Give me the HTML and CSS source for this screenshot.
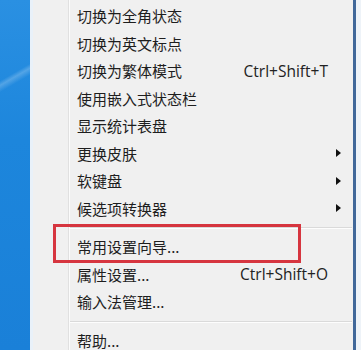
FILE: index.html
```html
<!DOCTYPE html>
<html lang="zh-CN">
<head>
<meta charset="utf-8">
<title>输入法菜单</title>
<link rel="stylesheet" href="styles.css">
</head>
<body>
<div class="screen">
  <div class="desk"></div>
  <div class="menu">
    <div class="item"><span class="label">切换为全角状态</span></div>
    <div class="item"><span class="label">切换为英文标点</span></div>
    <div class="item"><span class="label">切换为繁体模式</span><span class="key">Ctrl+Shift+T</span></div>
    <div class="item"><span class="label">使用嵌入式状态栏</span></div>
    <div class="item"><span class="label">显示统计表盘</span></div>
    <div class="item"><span class="label">更换皮肤</span><span class="arrow"></span></div>
    <div class="item"><span class="label">软键盘</span><span class="arrow"></span></div>
    <div class="item"><span class="label">候选项转换器</span><span class="arrow"></span></div>
    <div class="sep"></div>
    <div class="item"><span class="label">常用设置向导...</span></div>
    <div class="item"><span class="label">属性设置...</span><span class="key">Ctrl+Shift+O</span></div>
    <div class="item"><span class="label">输入法管理...</span></div>
    <div class="sep"></div>
    <div class="item"><span class="label">帮助...</span></div>
    <div class="highlight"></div>
  </div>
  <div class="edge"></div>
</div>
</body>
</html>
```

FILE: styles.css
```css
html, body {
  margin: 0;
  padding: 0;
  background: #ffffff;
}

.screen {
  display: flex;
  width: 361px;
  height: 350px;
  overflow: hidden;
}

.desk {
  width: 30px;
  flex: none;
  background:
    linear-gradient(150deg, transparent 0, transparent 70px, rgba(255,255,255,0.22) 74px, transparent 80px),
    linear-gradient(180deg, #2a90e2 0%, #1d86dc 40%, #1a80d8 100%);
}

.menu {
  position: relative;
  width: 320px;
  flex: none;
  box-sizing: content-box;
  border-left: 3px solid #e9f1f9;
  border-right: 3px solid #41689a;
  padding-top: 2px;
  background-color: #f0f0f0;
  background-image: linear-gradient(to right,
    transparent 35px, #e0e0e0 35px, #e0e0e0 36px,
    #fbfbfb 36px, #fbfbfb 37px, transparent 37px);
  font-family: "Noto Sans CJK SC", "Noto Sans", sans-serif;
  font-size: 15px;
  color: #1e1e1e;
}

.item {
  display: flex;
  align-items: center;
  height: 27.5px;
  padding-left: 44px;
  padding-right: 12px;
}

.label {
  flex: none;
  white-space: nowrap;
}

.key {
  margin-left: auto;
  margin-right: 13px;
  font-family: "Open Sans", "Liberation Sans", sans-serif;
  font-size: 15.5px;
  color: #222222;
  white-space: nowrap;
}

.arrow {
  margin-left: auto;
  width: 0;
  height: 0;
  border-left: 5px solid #111;
  border-top: 4px solid transparent;
  border-bottom: 4px solid transparent;
}

.sep {
  height: 0;
  margin: 5px 1px 4px 37px;
  border-top: 1px solid #dadada;
  border-bottom: 1px solid #fdfdfd;
}

.highlight {
  position: absolute;
  left: 20px;
  top: 224px;
  width: 248px;
  height: 39px;
  box-sizing: border-box;
  border: 3px solid #d6353f;
  pointer-events: none;
}

.edge {
  flex: 1;
  background: #eef3f8;
}
```
